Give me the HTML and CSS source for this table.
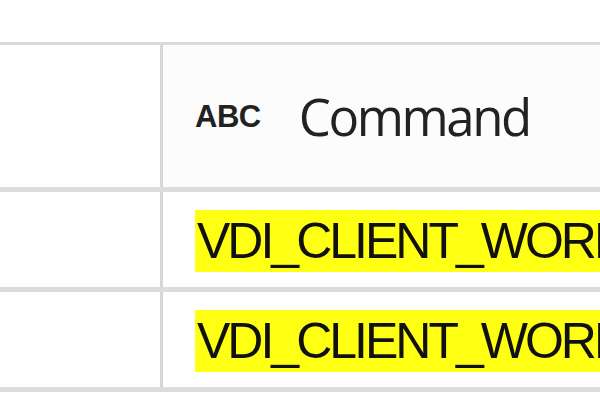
FILE: index.html
```html
<!DOCTYPE html>
<html lang="en">
<head>
    <meta charset="UTF-8">
    <title>Command</title>
    <link rel="stylesheet" href="styles.css">
</head>
<body>
    <div class="grid">
        <div class="row head">
            <div class="cell first"></div>
            <div class="cell col">
                <span class="type">ABC</span>
                <span class="title">Command</span>
            </div>
        </div>
        <div class="row">
            <div class="cell first"></div>
            <div class="cell"><span class="hl">VDI_CLIENT_WORKSPACE</span></div>
        </div>
        <div class="row">
            <div class="cell first"></div>
            <div class="cell"><span class="hl">VDI_CLIENT_WORKSPACE</span></div>
        </div>
    </div>
</body>
</html>
```

FILE: styles.css
```css
body {
    margin: 0;
    background: #fff;
    overflow: hidden;
    font-family: "Liberation Sans", Arial, sans-serif;
    color: #111;
}
.grid {
    margin-top: 42px;
    border-top: 3px solid #dadada;
}
.row {
    display: flex;
    height: 95px;
    border-bottom: 5px solid #dcdcdc;
    white-space: nowrap;
}
.row.head {
    height: 142px;
    background: #fcfcfc;
}
.cell {
    display: flex;
    align-items: center;
    padding-left: 32px;
    overflow: hidden;
    flex: 1;
}
.cell.first {
    flex: none;
    width: 160px;
    padding: 0;
    border-right: 3px solid #d6d6d6;
    background: #fff;
}
.col {
    gap: 38px;
}
.type {
    font-weight: bold;
    font-size: 31px;
    letter-spacing: -0.5px;
    color: #222;
    margin-top: 2px;
}
.title {
    font-family: "Open Sans", sans-serif;
    font-size: 51px;
    letter-spacing: -2.4px;
    color: #222;
}
.hl {
    background: #ffff14;
    font-size: 50px;
    letter-spacing: -3px;
    line-height: 62px;
    padding-left: 2px;
    margin-top: 2px;
}
```
